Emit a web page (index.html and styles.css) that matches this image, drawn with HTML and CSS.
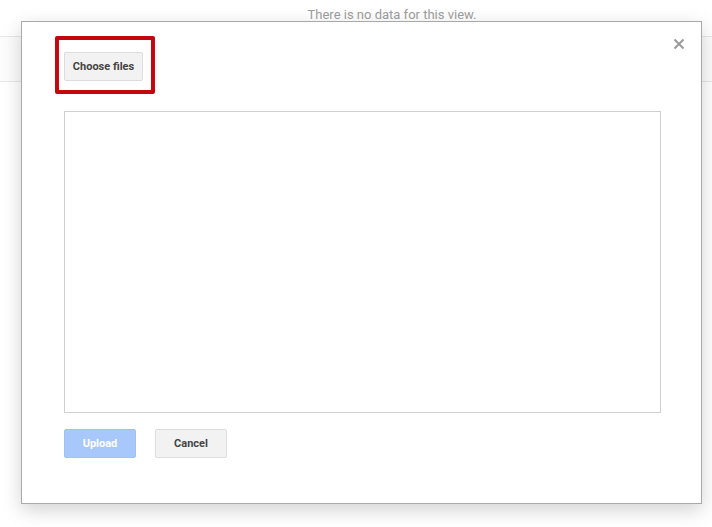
FILE: index.html
```html
<!DOCTYPE html>
<html lang="en">
<head>
    <meta charset="UTF-8">
    <title>Upload files</title>
    <link rel="stylesheet" href="styles.css">
</head>
<body>
<div class="page">
    <div class="empty">There is no data for this view.</div>
    <div class="toolbar"></div>
</div>

<div class="dialog">
    <div class="head">
        <div class="mark">
            <button class="btn">Choose files</button>
        </div>
        <span class="close">
            <svg width="12" height="12" viewBox="0 0 12 12">
                <path d="M1.5 1.5 L10.5 10.5 M10.5 1.5 L1.5 10.5" stroke="#9a9a9a" stroke-width="2"/>
            </svg>
        </span>
    </div>
    <div class="drop"></div>
    <div class="actions">
        <button class="btn primary">Upload</button>
        <button class="btn">Cancel</button>
    </div>
</div>
</body>
</html>
```

FILE: styles.css
```css
*{
    margin: 0;
    padding: 0;
    box-sizing: border-box;
}
body{
    background: #fff;
    font-family: Roboto, "Liberation Sans", Arial, sans-serif;
}
.page{
    height: 527px;
}
.empty{
    height: 36px;
    padding: 7px 0 0 72px;
    text-align: center;
    font-size: 13px;
    color: #9e9e9e;
}
.toolbar{
    height: 46px;
    border-top: 1px solid #e6e6e6;
    border-bottom: 1px solid #e6e6e6;
    background: #fcfcfc;
}
/* modal sits over the page */
.dialog{
    position: absolute;
    left: 21px;
    top: 21px;
    width: 681px;
    height: 483px;
    background: #fff;
    border: 1px solid #a9a9a9;
    box-shadow: 0 6px 18px rgba(0,0,0,0.18);
    padding: 14px 16px 0 33px;
}
.head{
    display: flex;
    justify-content: space-between;
    align-items: flex-start;
}
.mark{
    width: 100px;
    height: 58px;
    border: 4px solid #c4060e;
    border-radius: 2px;
    padding: 12px 0 0 5px;
}
.close{
    margin-top: 2px;
    cursor: pointer;
}
.close svg{
    display: block;
}
.btn{
    height: 29px;
    padding: 0 4px;
    white-space: nowrap;
    font-family: Roboto, "Liberation Sans", Arial, sans-serif;
    font-size: 11px;
    font-weight: bold;
    color: #444;
    background: #f2f2f2;
    border: 1px solid #dcdcdc;
    border-radius: 2px;
}
.mark .btn{
    width: 79px;
}
.drop{
    width: 597px;
    height: 302px;
    margin: 17px 0 0 9px;
    border: 1px solid #d0d0d0;
}
.actions{
    display: flex;
    gap: 19px;
    margin: 16px 0 0 9px;
}
.actions .btn{
    width: 72px;
    height: 29px;
}
.btn.primary{
    background: #a8c7fa;
    border-color: #a0c0f6;
    color: #fff;
}
```
